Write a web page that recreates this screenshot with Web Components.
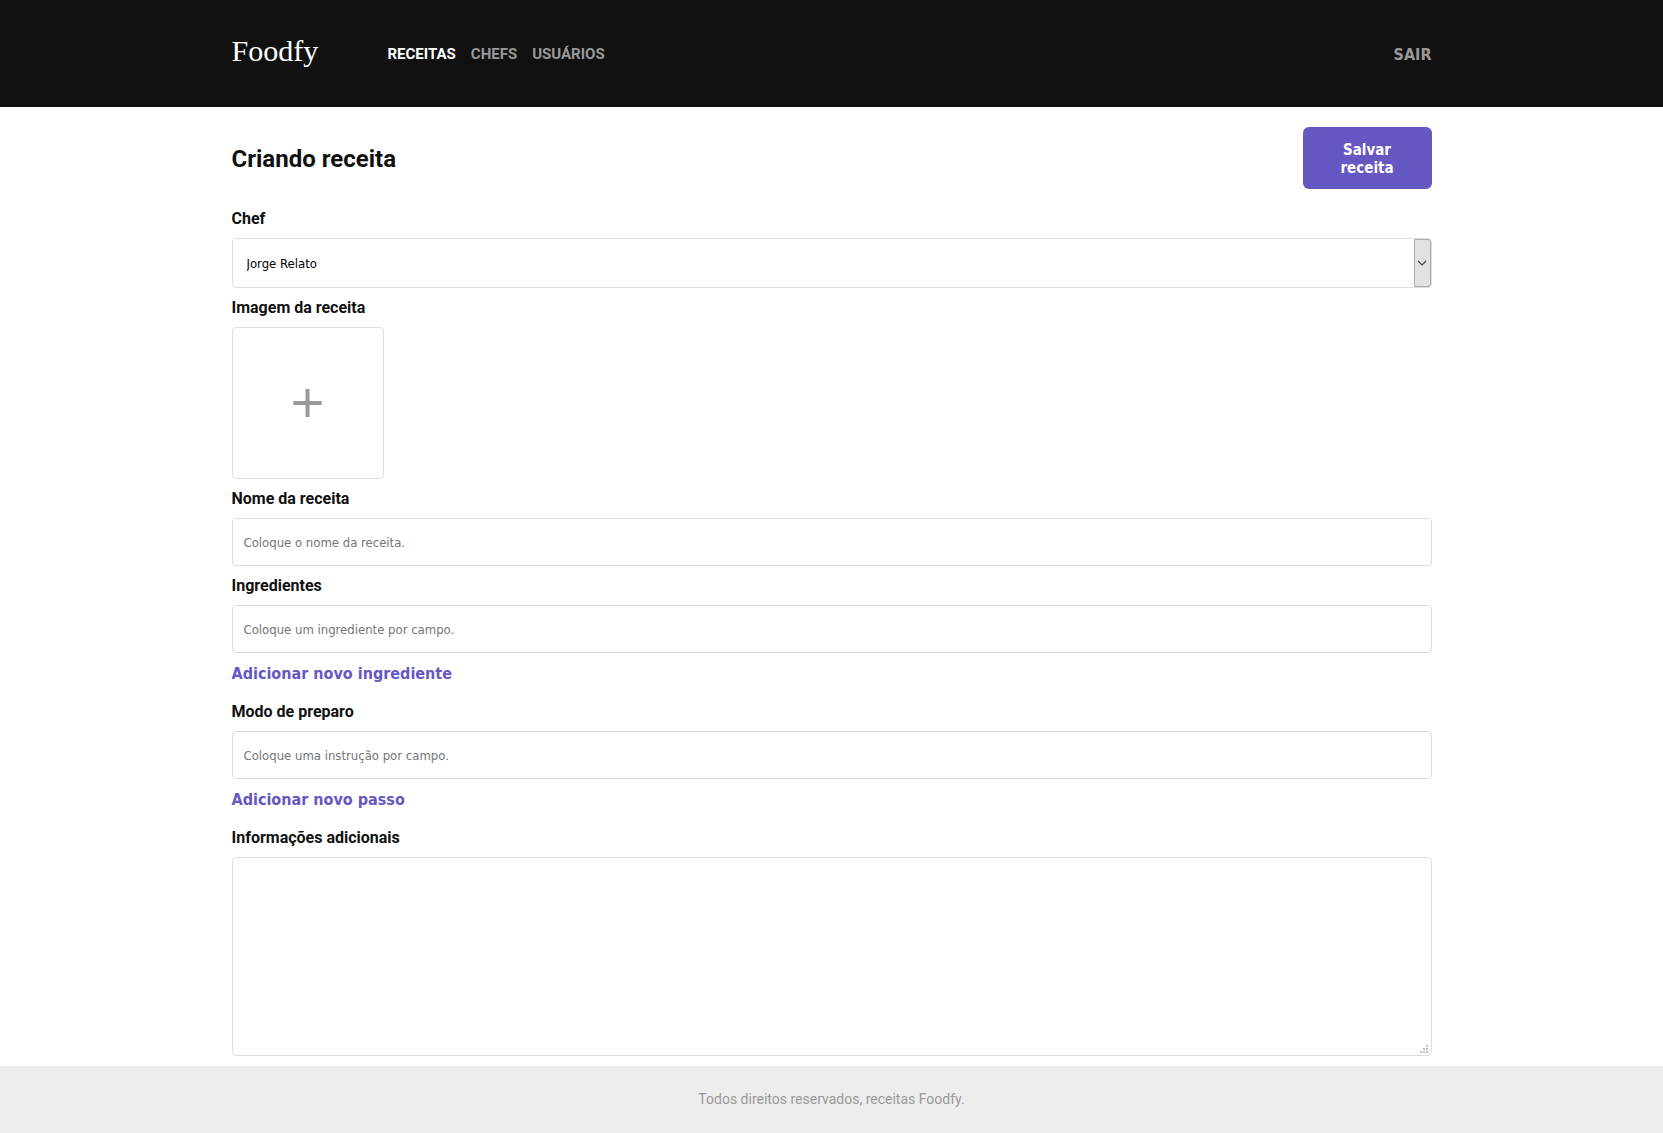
<!DOCTYPE html>
<html lang="pt-BR">
<head>
<meta charset="utf-8">
<meta name="viewport" content="width=device-width, initial-scale=1">
<title>Foodfy</title>
<style>
  :root {
    --ink: #111111;
    --muted: #999999;
    --line: #dddddd;
    --accent: #6558c3;
    --ui: "DejaVu Sans Condensed", "DejaVu Sans", sans-serif;
    --content: 1200px;
  }
  body { margin: 0; background: #fff; color: var(--ink); font-family: Roboto, sans-serif; }
</style>
</head>
<body>
<recipe-app></recipe-app>
<script>
const define = (name, html, setup) => {
  const template = document.createElement('template');
  template.innerHTML = '<style>*{box-sizing:border-box}</style>' + html;
  customElements.define(name, class extends HTMLElement {
    constructor() {
      super();
      this.attachShadow({ mode: 'open' }).append(template.content.cloneNode(true));
    }
    connectedCallback() { if (setup) setup(this, this.shadowRoot); }
  });
};

const fieldStyle = `
  :host { display: flex; flex-direction: column; gap: 10px; }
  label, .label { font-size: 16px; font-weight: 700; line-height: 19px; }
  input, textarea, select {
    display: block; width: 100%; margin: 0; border: 1px solid var(--line);
    border-radius: 4px; background: #fff; font-family: var(--ui); font-size: 13px; outline-color: var(--accent);
  }`;

define('site-header', `
  <style>
    :host { display: block; background: var(--ink); }
    .bar { display: flex; align-items: center; max-width: var(--content); height: 107px; margin: 0 auto; }
    a { text-decoration: none; }
    .logo { width: 156px; padding-bottom: 6px; color: #fff; font: 30px/36px "Liberation Serif", serif; }
    nav { display: flex; flex: 1; gap: 15px; }
    ::slotted(a) { color: var(--muted); text-decoration: none; font-size: 15px; font-weight: 700; line-height: 18px; }
    ::slotted(a[aria-current]) { color: #fff; }
    button { padding: 2px 0 0; border: 0; background: none; color: var(--muted); font: 700 16px/18px var(--ui); cursor: pointer; }
  </style>
  <header class="bar">
    <a class="logo" href="#">Foodfy</a>
    <nav><slot></slot></nav>
    <button type="button">SAIR</button>
  </header>`);

define('page-title', `
  <style>
    :host { display: flex; align-items: center; justify-content: space-between; }
    h1 { margin: 0; padding-top: 2px; font-size: 24px; font-weight: 700; line-height: 28px; }
    button { width: 129px; padding: 14px 30px 12px; border: 0; border-radius: 6px; background: var(--accent);
      color: #fff; font: 700 15px/18px var(--ui); cursor: pointer; }
  </style>
  <h1><slot></slot></h1>
  <button type="submit">Salvar receita</button>`);

define('text-field', `
  <style>${fieldStyle} input { height: 48px; padding: 0 11px; } input::placeholder { color: #757575; }</style>
  <label for="field"></label>
  <input id="field" type="text">`, (host, root) => {
    root.querySelector('label').textContent = host.getAttribute('label');
    root.querySelector('input').placeholder = host.getAttribute('placeholder');
  });

define('select-field', `
  <style>${fieldStyle}
    .box { display: grid; }
    .box > * { grid-area: 1 / 1; }
    select { height: 50px; padding: 0 14px; appearance: none; color: #000; }
    .arrow { justify-self: end; display: grid; place-items: center; width: 17px; height: 48px; margin: 1px;
      border: 1px solid #adadad; border-radius: 0 3px 3px 0; background: #e1e1e1; pointer-events: none; }
  </style>
  <label for="field"></label>
  <div class="box">
    <select id="field"></select>
    <span class="arrow"><svg width="10" height="6" viewBox="0 0 10 6" fill="none" stroke="#444" stroke-width="1.2"><path d="M1 1l4 4 4-4"/></svg></span>
  </div>`, (host, root) => {
    root.querySelector('label').textContent = host.getAttribute('label');
    root.querySelector('select').add(new Option(host.getAttribute('value')));
  });

define('photo-field', `
  <style>${fieldStyle}
    button { display: grid; place-items: center; width: 152px; height: 152px; padding: 0;
      border: 1px solid var(--line); border-radius: 4px; background: #fff; cursor: pointer; }
  </style>
  <span class="label" id="caption"><slot></slot></span>
  <button type="button" aria-labelledby="caption"><svg width="30" height="30" viewBox="0 0 30 30" fill="#999"><path d="M12.5 1h4v12h12.2v4H16.500v12h-4V17H.3v-4h12.200z"/></svg></button>`);

define('area-field', `
  <style>${fieldStyle}
    .box { display: grid; }
    .box > * { grid-area: 1 / 1; }
    textarea { height: 199px; padding: 10px; resize: none; }
    svg { place-self: end; margin: 3px 4px; pointer-events: none; }
  </style>
  <label for="field"></label>
  <div class="box">
    <textarea id="field"></textarea>
    <svg width="8" height="8" viewBox="0 0 8 8" fill="#bfbfbf"><path d="M6 0h2v2H6zM3 3h2v2H3zM6 3h2v2H6zM0 6h2v2H0zM3 6h2v2H3zM6 6h2v2H6z"/></svg>
  </div>`, (host, root) => {
    root.querySelector('label').textContent = host.getAttribute('label');
  });

define('add-button', `
  <style>
    :host { display: block; padding: 1px 0 9px; }
    button { display: block; padding: 0; border: 0; background: none; color: var(--accent);
      font: 700 16px/19px var(--ui); cursor: pointer; }
  </style>
  <button type="button"><slot></slot></button>`);

define('site-footer', `
  <style>
    :host { display: block; padding: 24px 0; background: #ededed; }
    p { margin: 0; color: var(--muted); text-align: center; font-size: 14px; line-height: 19px; }
  </style>
  <footer><p><slot></slot></p></footer>`);

define('recipe-app', `
  <style>
    :host { display: block; }
    form { display: flex; flex-direction: column; gap: 10px; max-width: var(--content); margin: 0 auto; padding: 20px 0 10px; }
    page-title { margin-bottom: 10px; }
  </style>
  <site-header>
    <a href="#" aria-current="page">RECEITAS</a>
    <a href="#">CHEFS</a>
    <a href="#">USUÁRIOS</a>
  </site-header>
  <main>
    <form>
      <page-title>Criando receita</page-title>
      <select-field label="Chef" value="Jorge Relato"></select-field>
      <photo-field>Imagem da receita</photo-field>
      <text-field label="Nome da receita" placeholder="Coloque o nome da receita."></text-field>
      <text-field label="Ingredientes" placeholder="Coloque um ingrediente por campo."></text-field>
      <add-button>Adicionar novo ingrediente</add-button>
      <text-field label="Modo de preparo" placeholder="Coloque uma instrução por campo."></text-field>
      <add-button>Adicionar novo passo</add-button>
      <area-field label="Informações adicionais"></area-field>
    </form>
  </main>
  <site-footer>Todos direitos reservados, receitas Foodfy.</site-footer>`);
</script>
</body>
</html>
